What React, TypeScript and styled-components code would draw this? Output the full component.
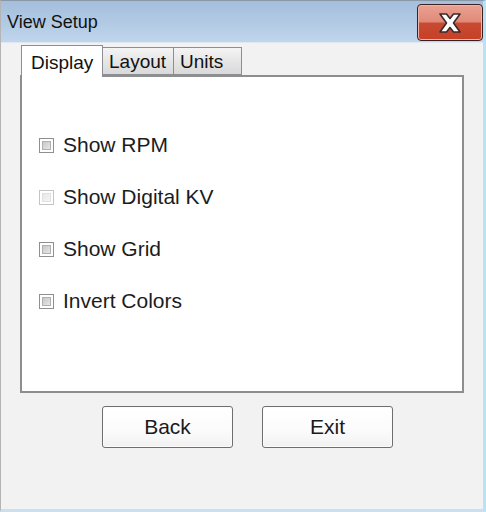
import styled, { createGlobalStyle } from "styled-components";

const GlobalStyle = createGlobalStyle`
  html, body {
    margin: 0;
    padding: 0;
    background: #f2f2f2;
  }
  * {
    box-sizing: border-box;
  }
`;

const Window = styled.div`
  width: 486px;
  height: 512px;
  display: flex;
  flex-direction: column;
  background: #f2f2f2;
  border-left: 1px solid #b4b4b4;
  border-right: 3px solid #b7e3f5;
  border-bottom: 3px solid #c9dff2;
  border-top: 1px solid #8a98a8;
  font-family: "Liberation Sans", Arial, sans-serif;
  color: #1a1a1a;
  overflow: hidden;
`;

const TitleBar = styled.div`
  height: 42px;
  flex: none;
  display: flex;
  align-items: center;
  justify-content: space-between;
  padding: 0 0 0 6px;
  background: linear-gradient(#a4bfdc, #b2cae4 55%, #c1d6ed);
  border-bottom: 1px solid #dfe8f2;
`;

const Title = styled.span`
  font-size: 18px;
  color: #111;
  margin-top: 2px;
`;

const CloseButton = styled.div`
  width: 66px;
  height: 37px;
  margin-top: 2px;
  border: 1px solid #3c2020;
  border-radius: 4px;
  box-shadow: inset 0 0 0 1px #f0b6aa;
  background: linear-gradient(#e9a193 0%, #e08a78 48%, #c84a32 52%, #c64026 100%);
  display: flex;
  align-items: center;
  justify-content: center;
`;

const Body = styled.div`
  flex: 1;
  display: flex;
  flex-direction: column;
  padding: 2px 20px 0 19px;
`;

const TabStrip = styled.div`
  display: flex;
  align-items: flex-end;
  padding-left: 1px;
  height: 32px;
  position: relative;
  z-index: 1;
  margin-bottom: -2px;
`;

const Tab = styled.div<{ $active?: boolean; $w: number }>`
  width: ${(p) => p.$w}px;
  height: ${(p) => (p.$active ? 32 : 28)}px;
  padding: ${(p) => (p.$active ? "2px 0 0 9px" : "1px 0 0 6px")};
  font-size: 19px;
  display: flex;
  align-items: center;
  background: ${(p) =>
    p.$active ? "#ffffff" : "linear-gradient(#f4f4f4, #e6e6e6 50%, #d9d9d9)"};
  border: 1px solid #8c8e94;
  border-bottom: ${(p) => (p.$active ? "none" : "1px solid #8c8e94")};
  border-left-width: ${(p) => (p.$active ? 1 : 0)}px;
  margin-bottom: ${(p) => (p.$active ? 0 : 2)}px;
  color: #111;
  &:nth-child(2) {
    border-left-width: 0;
  }
`;

const Panel = styled.div`
  width: 444px;
  height: 318px;
  background: #ffffff;
  border: 2px solid #8e8e8e;
  display: flex;
  flex-direction: column;
  gap: 30px;
  padding: 57px 0 0 17px;
`;

const OptionRow = styled.label`
  display: flex;
  align-items: center;
  gap: 9px;
  height: 22px;
  font-size: 21px;
  color: #1c1c1c;
`;

const Box = styled.span<{ $disabled?: boolean }>`
  width: 15px;
  height: 15px;
  border: 1px solid ${(p) => (p.$disabled ? "#c4c4c4" : "#8f8f8f")};
  background: #fff;
  padding: 2px;
  display: flex;
  &::after {
    content: "";
    flex: 1;
    background: ${(p) =>
      p.$disabled
        ? "linear-gradient(135deg, #e8e8e8, #f4f4f4)"
        : "linear-gradient(135deg, #c8c8c8, #e6e6e6)"};
    border: 1px solid ${(p) => (p.$disabled ? "#e0e0e0" : "#b0b0b0")};
  }
`;

const ButtonRow = styled.div`
  display: flex;
  gap: 29px;
  padding: 13px 0 0 82px;
`;

const PushButton = styled.div`
  width: 131px;
  height: 42px;
  border: 1px solid #6e6e6e;
  border-radius: 3px;
  background: linear-gradient(#ffffff, #fbfbfb 60%, #f1f1f1);
  box-shadow: inset 0 0 0 1px #fcfcfc;
  display: flex;
  align-items: center;
  justify-content: center;
  font-size: 21px;
  color: #1a1a1a;
`;

const options = [
  { label: "Show RPM", disabled: false },
  { label: "Show Digital KV", disabled: true },
  { label: "Show Grid", disabled: false },
  { label: "Invert Colors", disabled: false },
];

function CloseGlyph() {
  return (
    <svg width="26" height="24" viewBox="0 0 26 24">
      <path
        d="M3 3 L9.5 3 L13 7.5 L16.5 3 L23 3 L16.5 12 L23 21 L16.5 21 L13 16.5 L9.5 21 L3 21 L9.5 12 Z"
        fill="#ffffff"
        stroke="#3a2a2a"
        strokeWidth="1.6"
        strokeLinejoin="round"
      />
    </svg>
  );
}

export default function App() {
  return (
    <>
      <GlobalStyle />
      <Window>
        <TitleBar>
          <Title>View Setup</Title>
          <CloseButton>
            <CloseGlyph />
          </CloseButton>
        </TitleBar>
        <Body>
          <TabStrip>
            <Tab $active $w={82}>Display</Tab>
            <Tab $w={71}>Layout</Tab>
            <Tab $w={68}>Units</Tab>
          </TabStrip>
          <Panel>
            {options.map((o) => (
              <OptionRow key={o.label}>
                <Box $disabled={o.disabled} />
                {o.label}
              </OptionRow>
            ))}
          </Panel>
          <ButtonRow>
            <PushButton>Back</PushButton>
            <PushButton>Exit</PushButton>
          </ButtonRow>
        </Body>
      </Window>
    </>
  );
}
